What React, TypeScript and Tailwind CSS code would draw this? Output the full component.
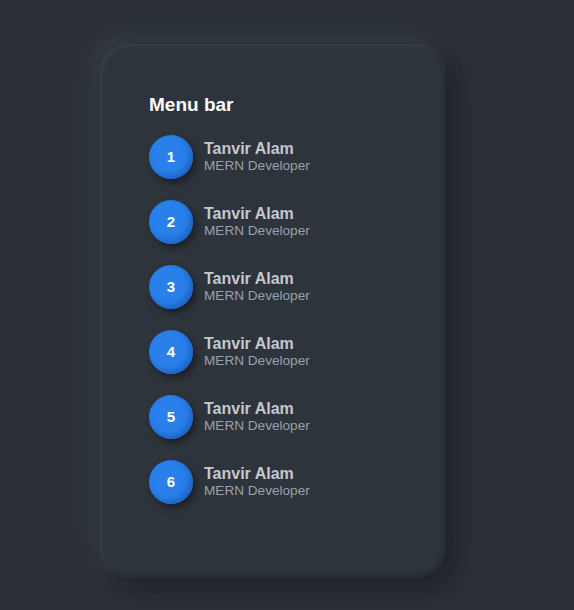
export default function App() {
  const items = [1, 2, 3, 4, 5, 6];
  return (
    <div className="flex min-h-[610px] w-full items-start bg-[#2c3139] pt-[44px] pl-[100px] font-['Liberation_Sans',Arial,sans-serif]">
      <div className="h-[534px] w-[346px] rounded-[30px] bg-[#2e343c] px-[49px] pt-[49px] shadow-[12px_12px_24px_#1f2329,-8px_-8px_20px_#363c45,inset_2px_2px_4px_#3a414a,inset_-2px_-2px_4px_#252a30]">
        <h1 className="text-[19px] leading-[24px] font-bold text-white">Menu bar</h1>
        <ul className="mt-[18px] flex flex-col gap-[21px]">
          {items.map((n) => (
            <li key={n} className="flex items-center gap-[11px]">
              <span className="flex h-[44px] w-[44px] shrink-0 items-center justify-center rounded-full bg-[#2a80ea] text-[15px] font-bold text-white shadow-[3px_4px_6px_#1c2025,inset_-3px_-3px_6px_#1d63c4]">
                {n}
              </span>
              <div className="mt-[-2px] flex flex-col">
                <span className="text-[16px] leading-[19px] font-bold text-[#c5c8ce]">Tanvir Alam</span>
                <span className="text-[13.6px] leading-[16px] text-[#9aa0a8]">MERN Developer</span>
              </div>
            </li>
          ))}
        </ul>
      </div>
    </div>
  );
}
